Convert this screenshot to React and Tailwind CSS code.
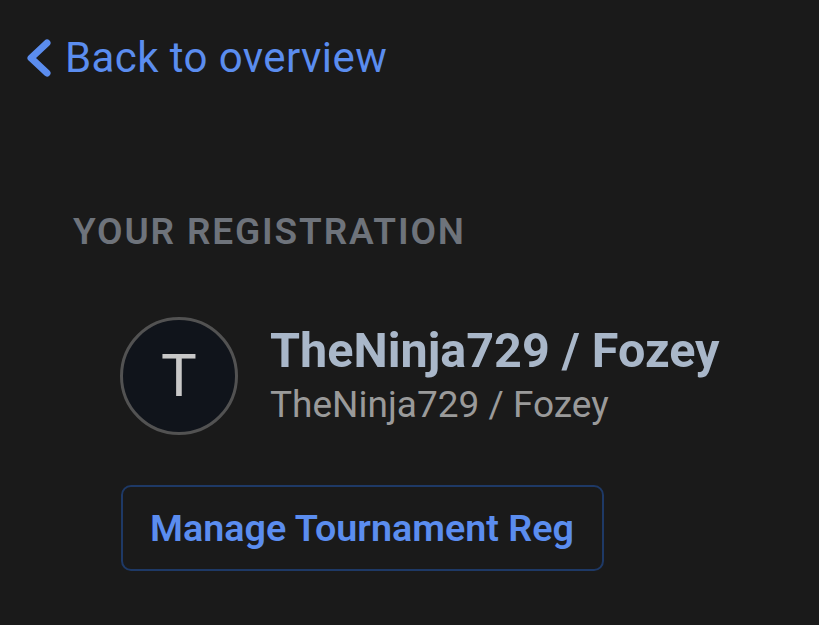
import React from "react";

export default function App() {
  return (
    <div className="min-h-[625px] w-full bg-[#1a1a1a] font-['Roboto',sans-serif] overflow-hidden">
      {/* back link */}
      <div className="pl-[25px] pt-[34px]">
        <a href="#" className="inline-flex items-center gap-[12px] text-[#5b8def] text-[42px] leading-[48px] tracking-[0.01em]">
          <svg width="28" height="40" viewBox="0 0 28 40" className="shrink-0">
            <polyline points="22,5 6,20 22,35" fill="none" stroke="#5b8def" strokeWidth="7" strokeLinecap="round" strokeLinejoin="round" />
          </svg>
          <span>Back to overview</span>
        </a>
      </div>

      {/* registration */}
      <div className="pl-[73px] pt-[127px]">
        <h2 className="text-[37px] leading-[40px] font-semibold tracking-[0.05em] text-[#6e737b] uppercase">Your Registration</h2>

        <div className="pl-[47px] pt-[65px] flex items-center gap-[32px]">
          <div className="w-[118px] h-[118px] rounded-full border-[3px] border-[#525252] bg-[#10141b] flex items-center justify-center text-[#c8c8c8] text-[60px] font-normal">
            T
          </div>
          <div className="flex flex-col gap-[6px]">
            <span className="text-[48.5px] leading-[52px] font-bold text-[#a9b7c9]">TheNinja729 / Fozey</span>
            <span className="text-[37px] leading-[44px] text-[#9a9a9a]">TheNinja729 / Fozey</span>
          </div>
        </div>

        <div className="pl-[48px] pt-[50px]">
          <button className="h-[86px] pl-[27px] pr-[28px] rounded-[10px] border-2 border-[#1e3966] text-[#5b8def] text-[37.7px] font-semibold">
            Manage Tournament Reg
          </button>
        </div>
      </div>
    </div>
  );
}
